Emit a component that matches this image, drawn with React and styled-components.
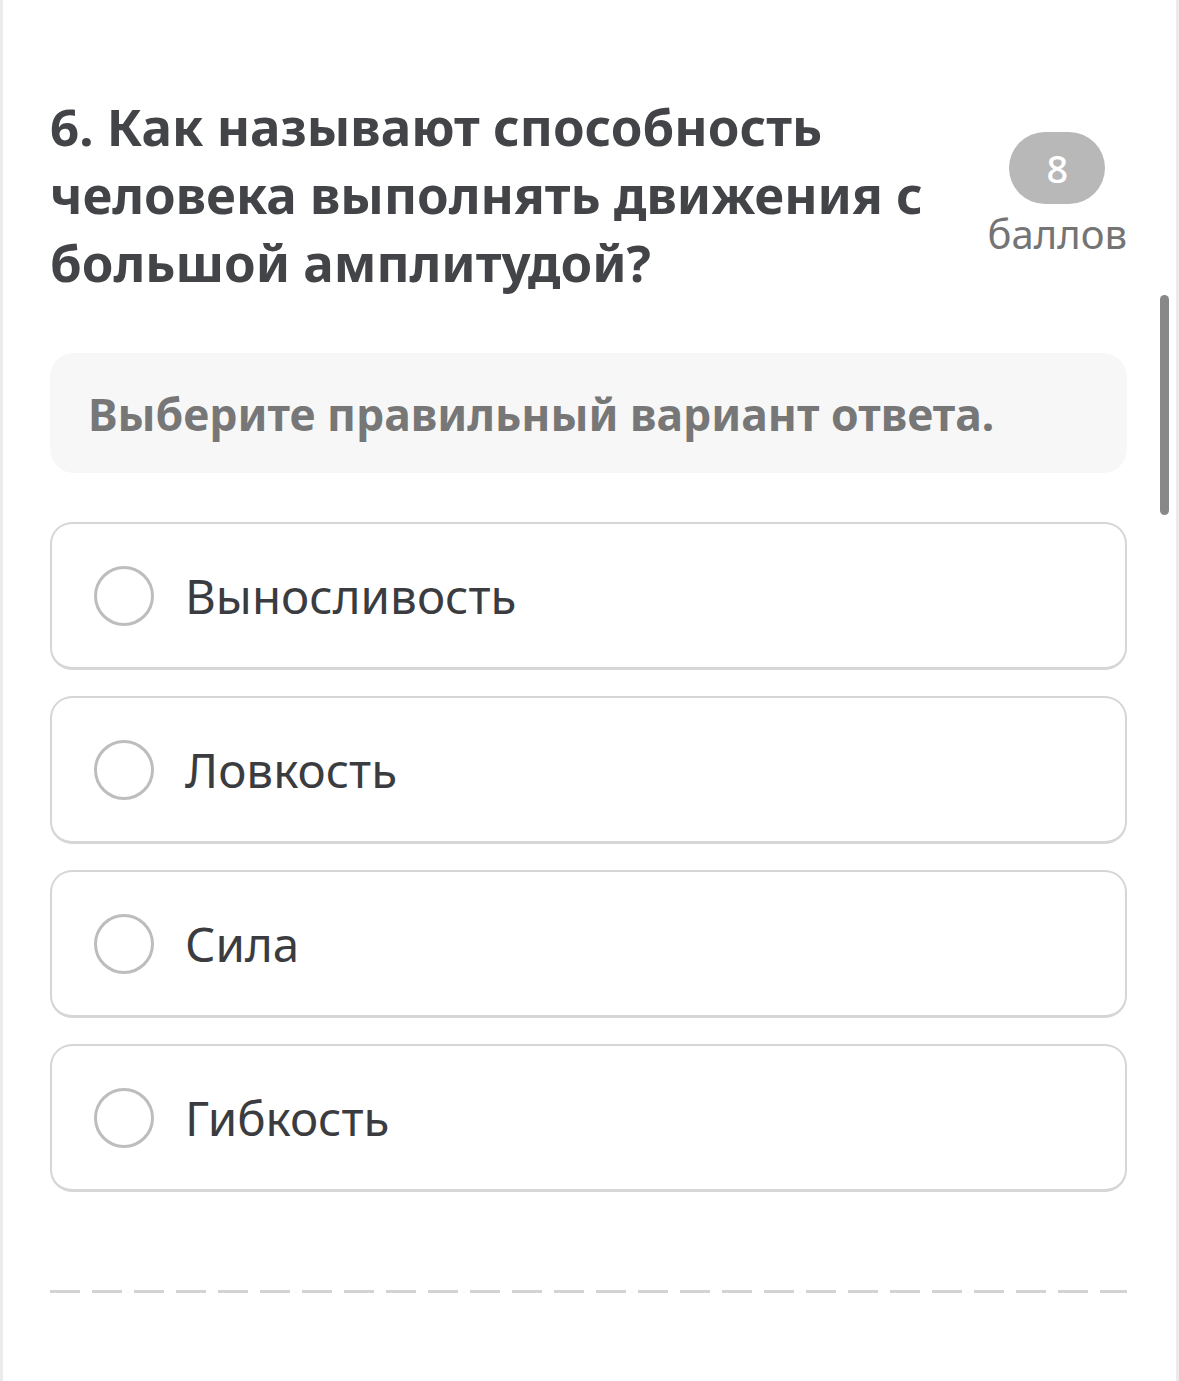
import styled, { createGlobalStyle } from 'styled-components';

const GlobalStyle = createGlobalStyle`
    html, body {
        margin: 0;
        padding: 0;
        background: #ffffff;
    }
    body {
        font-family: "Noto Sans", "Open Sans", sans-serif;
    }
`;

const options = ['Выносливость', 'Ловкость', 'Сила', 'Гибкость'];

const App = () => {
    return (
        <>
            <GlobalStyle />
            <Page>
                <Header>
                    <Title>6. Как называют способность человека выполнять движения с большой амплитудой?</Title>
                    <Score>
                        <Badge>8</Badge>
                        <ScoreLabel>баллов</ScoreLabel>
                    </Score>
                </Header>
                <Hint>Выберите правильный вариант ответа.</Hint>
                <Options>
                    {options.map((item) => (
                        <Option key={item}>
                            <Radio />
                            <OptionText>{item}</OptionText>
                        </Option>
                    ))}
                </Options>
                <Divider />
                <Scrollbar />
            </Page>
        </>
    );
};

const Page = styled.div`
    position: relative;
    box-sizing: border-box;
    width: 1179px;
    min-height: 1381px;
    padding: 92px 49px 0 47px;
    border-left: 3px solid #ebebeb;
    border-right: 3px solid #ebebeb;
`;

const Header = styled.div`
    display: flex;
    align-items: center;
    justify-content: space-between;
    gap: 20px;
`;

const Title = styled.h1`
    margin: 0;
    max-width: 935px;
    font-size: 51px;
    line-height: 68px;
    font-weight: 700;
    color: #434447;
`;

const Score = styled.div`
    display: flex;
    flex-direction: column;
    align-items: center;
    flex-shrink: 0;
`;

const Badge = styled.div`
    display: flex;
    align-items: center;
    justify-content: center;
    width: 96px;
    height: 72px;
    border-radius: 36px;
    background: #b8b8b8;
    color: #ffffff;
    font-size: 38px;
    font-weight: 500;
`;

const ScoreLabel = styled.div`
    margin-top: 8px;
    font-size: 40px;
    line-height: 44px;
    color: #747474;
`;

const Hint = styled.div`
    margin-top: 57px;
    height: 120px;
    display: flex;
    align-items: center;
    padding: 0 38px;
    border-radius: 24px;
    background: #f7f7f7;
    color: #777777;
    font-size: 44.5px;
    font-weight: 700;
`;

const Options = styled.div`
    display: flex;
    flex-direction: column;
    gap: 26px;
    margin-top: 49px;
`;

const Option = styled.div`
    box-sizing: border-box;
    display: flex;
    align-items: center;
    height: 148px;
    padding: 0 42px;
    border: 2px solid #d6d6d6;
    border-bottom-width: 3px;
    border-radius: 22px;
    background: #ffffff;
`;

const Radio = styled.div`
    box-sizing: border-box;
    width: 60px;
    height: 60px;
    border-radius: 50%;
    border: 3px solid #bdbdbd;
    flex-shrink: 0;
`;

const OptionText = styled.div`
    margin-left: 31px;
    font-size: 47.5px;
    color: #3b3c3f;
`;

const Divider = styled.div`
    margin-top: 98px;
    height: 3px;
    background: repeating-linear-gradient(to right, #d3d3d3 0 30px, transparent 30px 42px);
`;

const Scrollbar = styled.div`
    position: absolute;
    top: 295px;
    left: 1157px;
    width: 9px;
    height: 220px;
    border-radius: 5px;
    background: #888888;
`;

export default App;
